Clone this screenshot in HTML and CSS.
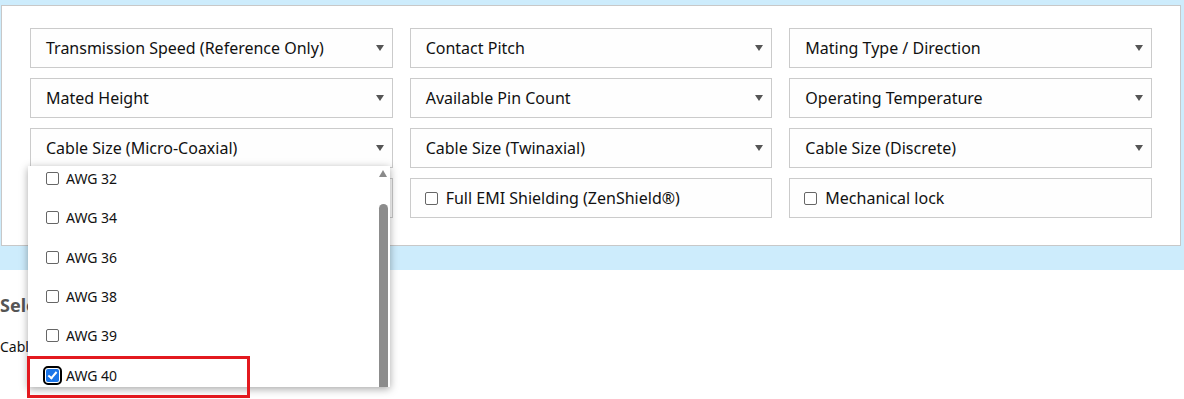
FILE: index.html
```html
<!DOCTYPE html>
<html lang="en">
<head>
    <meta charset="UTF-8">
    <title>Connector Search</title>
    <link rel="stylesheet" href="styles.css">
</head>
<body>
    <div class="band">
        <section class="filters">
            <div class="field select"><span>Transmission Speed (Reference Only)</span><i class="arrow"></i></div>
            <div class="field select"><span>Contact Pitch</span><i class="arrow"></i></div>
            <div class="field select"><span>Mating Type / Direction</span><i class="arrow"></i></div>

            <div class="field select"><span>Mated Height</span><i class="arrow"></i></div>
            <div class="field select"><span>Available Pin Count</span><i class="arrow"></i></div>
            <div class="field select"><span>Operating Temperature</span><i class="arrow"></i></div>

            <div class="field select open">
                <span>Cable Size (Micro-Coaxial)</span><i class="arrow"></i>
                <div class="dropdown">
                    <ul class="options">
                        <li><span class="box"></span>AWG 32</li>
                        <li><span class="box"></span>AWG 34</li>
                        <li><span class="box"></span>AWG 36</li>
                        <li><span class="box"></span>AWG 38</li>
                        <li><span class="box"></span>AWG 39</li>
                        <li class="picked"><span class="box checked"></span>AWG 40</li>
                    </ul>
                    <div class="scroll">
                        <i class="up"></i>
                        <div class="thumb"></div>
                    </div>
                </div>
                <div class="mark"></div>
            </div>
            <div class="field select"><span>Cable Size (Twinaxial)</span><i class="arrow"></i></div>
            <div class="field select"><span>Cable Size (Discrete)</span><i class="arrow"></i></div>

            <div class="field check"><span class="box"></span>Flex cable</div>
            <div class="field check"><span class="box"></span>Full EMI Shielding (ZenShield®)</div>
            <div class="field check"><span class="box"></span>Mechanical lock</div>
        </section>
    </div>

    <main class="results">
        <h2>Selected conditions</h2>
        <p>Cable Size (Micro-Coaxial): AWG 40</p>
    </main>
</body>
</html>
```

FILE: styles.css
```css
html,
body {
    min-height: 100vh;
}

body {
    margin: 0;
    font-family: "Noto Sans", "Open Sans", sans-serif;
    color: #111;
    background-color: #fff;
}

.band {
    background-color: #cdecfc;
    padding: 5px 3px 24px 1px;
}

.filters {
    background-color: #fff;
    border: 1px solid #c8c8c8;
    padding: 22px 28px 27px;
    display: grid;
    grid-template-columns: repeat(3, 1fr);
    column-gap: 17px;
    row-gap: 10px;
}

.field {
    position: relative;
    height: 40px;
    box-sizing: border-box;
    border: 1px solid #cbcbcb;
    background-color: #fefefe;
    display: flex;
    align-items: center;
    font-size: 16px;
}

.select {
    padding: 0 0 0 15px;
}

.select .arrow {
    margin-left: auto;
    margin-right: 8px;
    width: 0;
    height: 0;
    border-left: 4px solid transparent;
    border-right: 4px solid transparent;
    border-top: 6px solid #555;
}

.check {
    padding-left: 14px;
}

.box {
    width: 11px;
    height: 11px;
    border: 1px solid #666;
    border-radius: 2px;
    background-color: #fff;
    margin-right: 8px;
    flex: none;
}

.dropdown {
    position: absolute;
    left: -3px;
    top: 37px;
    width: 362px;
    height: 221px;
    background-color: #fff;
    box-shadow: 0 2px 8px rgba(0, 0, 0, .35);
    overflow: hidden;
    z-index: 2;
}

.options {
    list-style: none;
    margin: 0;
    padding: 0;
    position: relative;
    top: -7px;
}

.options li {
    height: 39.3px;
    display: flex;
    align-items: center;
    padding-left: 18px;
    font-size: 14px;
}

.options .box {
    margin-right: 7px;
}

.box.checked {
    width: 13px;
    height: 13px;
    border: 0;
    border-radius: 2px;
    background-color: #1b75e8;
    outline: 2px solid #000;
    outline-offset: 1px;
    box-shadow: 0 0 0 1px #fff;
    position: relative;
}

.box.checked::after {
    content: "";
    position: absolute;
    left: 4px;
    top: 1px;
    width: 3px;
    height: 7px;
    border: solid #fff;
    border-width: 0 2px 2px 0;
    transform: rotate(40deg);
}

.scroll {
    position: absolute;
    right: 2px;
    top: 0;
    bottom: 0;
    width: 9px;
}

.scroll .up {
    position: absolute;
    left: 0;
    top: 4px;
    border-left: 4.5px solid transparent;
    border-right: 4.5px solid transparent;
    border-bottom: 7px solid #8a8a8a;
}

.scroll .thumb {
    position: absolute;
    left: 0;
    top: 38px;
    bottom: 0;
    width: 9px;
    background-color: #8c8c8c;
    border-radius: 5px 5px 0 0;
}

.mark {
    position: absolute;
    left: -4px;
    top: 227px;
    width: 217px;
    height: 36px;
    border: 3px solid #e3191f;
    z-index: 3;
}

.results {
    padding: 23px 0 0;
}

.results h2 {
    margin: 0 0 20px;
    font-size: 18px;
    color: #555;
}

.results p {
    margin: 0;
    font-size: 14px;
}
```
